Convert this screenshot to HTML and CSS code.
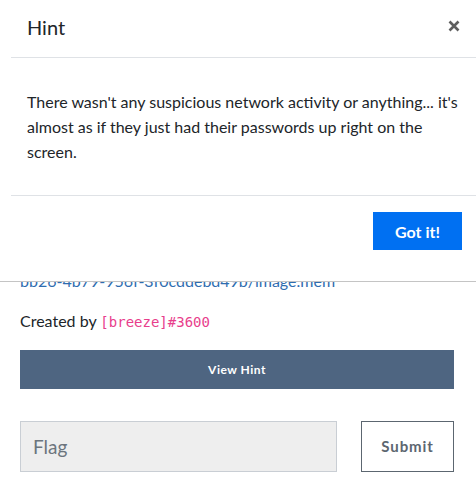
FILE: index.html
```html
<!DOCTYPE html>
<html>
<head>
<meta charset="utf-8">
<link rel="stylesheet" href="styles.css">
</head>
<body>
<div class="page">
  <p class="link-line"><a class="file-link" href="#">bb26-4b79-956f-3f0cddebd49b/image.mem</a></p>
  <p class="author">Created by <code class="handle">[breeze]#3600</code></p>
  <button class="view-hint">View Hint</button>
  <div class="flag-row">
    <input class="flag-input" type="text" placeholder="Flag">
    <button class="submit">Submit</button>
  </div>
</div>

<div class="overlay">
  <div class="modal">
    <div class="modal-header">
      <h5 class="modal-title">Hint</h5>
      <button class="close" aria-label="Close">
        <svg width="12" height="12" viewBox="0 0 12 12"><path d="M1.5 1.5 L10.5 10.5 M10.5 1.5 L1.5 10.5" stroke="#5f5f5f" stroke-width="2.6" stroke-linecap="butt"/></svg>
      </button>
    </div>
    <div class="modal-body">
      <p>There wasn't any suspicious network activity or anything... it's almost as if they just had their passwords up right on the screen.</p>
    </div>
    <div class="modal-footer">
      <button class="got-it">Got it!</button>
    </div>
  </div>
</div>
</body>
</html>
```

FILE: styles.css
```css
* { box-sizing: border-box; }

html, body {
  margin: 0;
  padding: 0;
  background: #ffffff;
  font-family: Lato, "Noto Sans", sans-serif;
  color: #212529;
}

body {
  width: 476px;
  height: 493px;
  position: relative;
  overflow: hidden;
}

.page {
  padding: 269px 22px 0 20px;
  font-size: 16px;
  line-height: 24px;
}

.page p { margin: 0 0 16px 0; }

.file-link {
  color: #2f6db0;
  text-decoration: none;
}

.author { color: #212529; }

.handle {
  font-family: "DejaVu Sans Mono", "Liberation Mono", monospace;
  font-size: 14px;
  color: #e83e8c;
}

.view-hint {
  display: block;
  width: 100%;
  height: 39px;
  border: none;
  background: #4e6581;
  color: #ffffff;
  font-family: Lato, sans-serif;
  font-weight: 700;
  font-size: 12px;
  letter-spacing: 0.5px;
  margin: 0;
  padding: 0;
}

.flag-row {
  display: flex;
  gap: 24px;
  margin-top: 32px;
}

.flag-input {
  width: 317px;
  height: 51px;
  background: #eeeeee;
  border: 1px solid #c9ced4;
  padding: 0 12px;
  font-family: Lato, sans-serif;
  font-size: 19px;
  color: #495057;
  outline: none;
  margin: 0;
}

.flag-input::placeholder { color: #6c757d; }

.submit {
  width: 93px;
  height: 51px;
  background: #ffffff;
  border: 1px solid #5c6670;
  color: #5c6670;
  font-family: Lato, sans-serif;
  font-weight: 700;
  font-size: 15px;
  letter-spacing: 0.9px;
  margin: 0;
  padding: 0 0 2px 0;
}

.overlay {
  position: absolute;
  top: 0;
  left: 0;
  right: 0;
  height: 282px;
  background: #ffffff;
  border-bottom: 1px solid #c4c4c4;
}

.modal {
  margin-left: 11px;
  width: 466px;
}

.modal-header {
  display: flex;
  align-items: flex-start;
  justify-content: space-between;
  padding: 12px 16px 15px 16px;
  border-bottom: 1px solid #dfe2e6;
}

.modal-title {
  margin: 0;
  font-size: 20px;
  line-height: 30px;
  font-weight: 400;
  color: #212529;
}

.close {
  background: none;
  border: none;
  padding: 0;
  margin: 8px 1px 0 0;
  width: 12px;
  height: 12px;
  display: flex;
}

.modal-body {
  padding: 31px 16px 31px 16px;
  border-bottom: 1px solid #dfe2e6;
}

.modal-body p {
  margin: 0;
  font-size: 16px;
  line-height: 25px;
  color: #212529;
}

.modal-footer {
  display: flex;
  justify-content: flex-end;
  padding: 16px 15px 0 16px;
}

.got-it {
  width: 89px;
  height: 38px;
  border: none;
  background: #0070f2;
  color: #ffffff;
  font-family: Lato, sans-serif;
  font-weight: 700;
  font-size: 16px;
  padding: 0;
  margin: 0;
}
```
